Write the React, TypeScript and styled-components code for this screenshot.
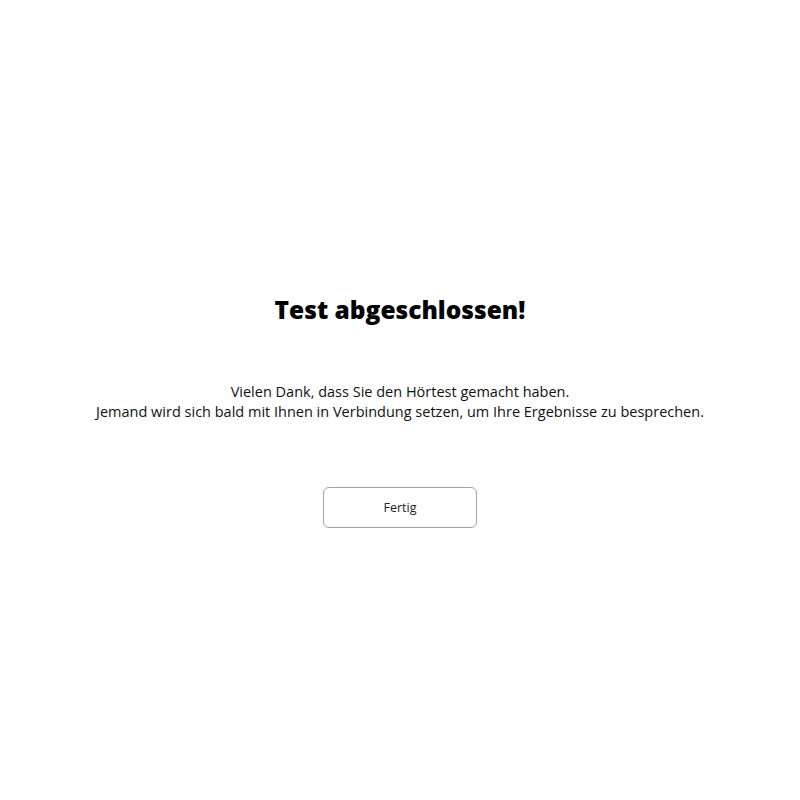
import styled, { createGlobalStyle } from "styled-components";

const GlobalStyle = createGlobalStyle`
  html, body {
    margin: 0;
    padding: 0;
    background: #fff;
  }
  body {
    font-family: "Open Sans", "Noto Sans", sans-serif;
    color: #111;
  }
`;

const Container = styled.div`
  width: 100vw;
  height: 800px;
  display: flex;
  flex-direction: column;
  align-items: center;
  padding-top: 295px;
  box-sizing: border-box;
`;
const H1 = styled.h1`
  margin: 0;
  text-align: center;
  font-size: 24.5px;
  font-weight: 800;
  line-height: 30px;
  color: #000;
`;
const P = styled.p`
  margin: 57px 0 0 0;
  text-align: center;
  font-size: 14.5px;
  line-height: 20px;
`;
const Button = styled.button`
  margin-top: 65px;
  width: 154px;
  height: 41px;
  border: 1px solid #a3a3a3;
  border-radius: 6px;
  background: #fff;
  color: #222;
  font-family: "Open Sans", "Noto Sans", sans-serif;
  font-size: 12.5px;
  cursor: pointer;
`;

function App() {
  return (
    <Container>
      <GlobalStyle />
      <H1>Test abgeschlossen!</H1>
      <P>
        Vielen Dank, dass Sie den Hörtest gemacht haben.
        <br />
        Jemand wird sich bald mit Ihnen in Verbindung setzen, um Ihre Ergebnisse zu besprechen.
      </P>
      <Button type="button">Fertig</Button>
    </Container>
  );
}

export default App;
